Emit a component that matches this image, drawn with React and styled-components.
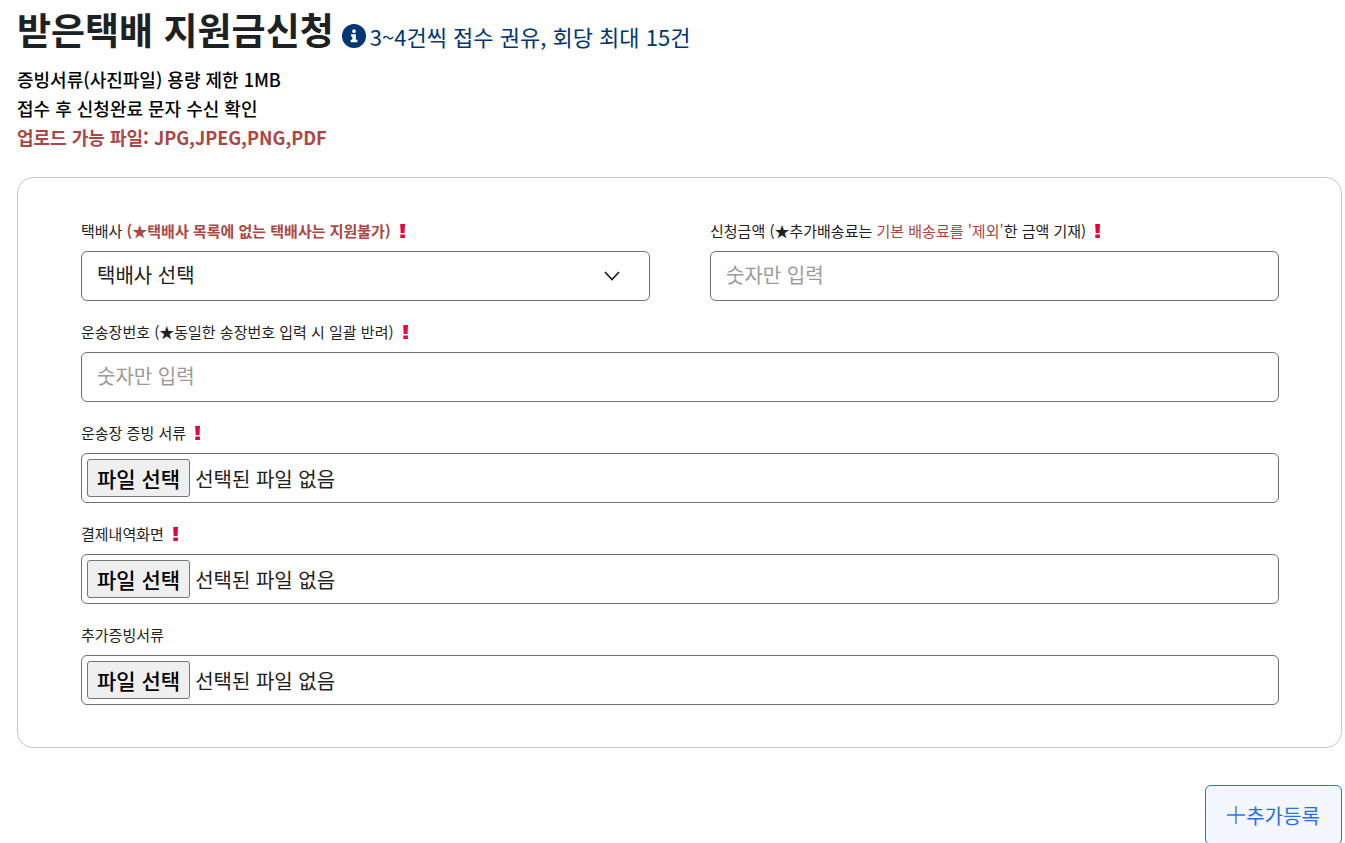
import React, { useId, useRef, useState } from "react";
import styled, { createGlobalStyle } from "styled-components";

const GlobalStyle = createGlobalStyle`
  *, *::before, *::after { box-sizing: border-box; }
  body {
    margin: 0;
    background: #ffffff;
    color: #1e2124;
    font-family: "Noto Sans CJK KR", "Noto Sans", sans-serif;
    font-size: 16px;
  }
  button, input, select { font: inherit; color: inherit; }
`;

const Page = styled.main`
  display: flex;
  flex-direction: column;
  padding: 5px 3px 40px 17px;
`;

const Heading = styled.header`
  display: flex;
  align-items: center;
  gap: 8px;
`;

const Title = styled.h1`
  margin: 0;
  font-size: 37px;
  line-height: 48px;
  font-weight: 700;
`;

const Notice = styled.p`
  display: flex;
  align-items: center;
  gap: 4px;
  margin: 0;
  padding-top: 14px;
  color: #003675;
  font-size: 22px;
  line-height: 32px;
`;

const Guide = styled.p`
  margin: 12px 0 0;
  color: #000000;
  font-size: 18px;
  line-height: 29px;
  font-weight: 500;
`;

const Line = styled.span`
  display: block;
`;

const Warn = styled.strong`
  color: #ad4545;
  font-weight: ${(p) => (p.$plain ? 400 : 700)};
`;

const Card = styled.section`
  display: flex;
  flex-direction: column;
  gap: 20px;
  margin-top: 25px;
  padding: 42px 62px 42px 63px;
  border: 1px solid #c6c6c6;
  border-radius: 16px;
`;

const Columns = styled.div`
  display: grid;
  grid-template-columns: 1fr 1fr;
  gap: 60px;
`;

const FieldBox = styled.div`
  display: flex;
  flex-direction: column;
  gap: 9px;
  min-width: 0;
`;

const Label = styled.label`
  display: flex;
  align-items: center;
  gap: 8px;
  font-size: 15px;
  line-height: 22px;
  white-space: nowrap;
`;

const controlFrame = `
  width: 100%;
  height: 50px;
  border: 1px solid #717171;
  border-radius: 6px;
  background: #ffffff;
  font-size: 20px;
`;

const TextInput = styled.input`
  ${controlFrame}
  padding: 0 15px 3px;
  &::placeholder { color: #9a9a9a; opacity: 1; }
`;

const SelectWrap = styled.div`
  display: grid;
  align-items: center;
  > * { grid-area: 1 / 1; }
  > svg { justify-self: end; margin-right: 30px; pointer-events: none; }
`;

const Select = styled.select`
  ${controlFrame}
  appearance: none;
  padding: 0 60px 4px 15px;
`;

const FileFrame = styled.div`
  ${controlFrame}
  display: flex;
  align-items: center;
  gap: 5px;
  padding: 0 5px;
`;

const FileButton = styled.button`
  height: 38px;
  padding: 0 9px;
  border: 1px solid #767676;
  border-radius: 3px;
  background: #efefef;
  color: #000000;
  font-size: 21px;
  line-height: 34px;
  font-weight: 500;
`;

const HiddenFile = styled.input`
  position: absolute;
  width: 1px;
  height: 1px;
  overflow: hidden;
  clip-path: inset(50%);
`;

const Actions = styled.div`
  display: flex;
  justify-content: flex-end;
  margin-top: 37px;
`;

const AddButton = styled.button`
  display: flex;
  align-items: center;
  justify-content: center;
  gap: 1px;
  width: 137px;
  height: 60px;
  padding: 0;
  border: 1px solid #256ef4;
  border-radius: 6px;
  background: #f4f7ff;
  color: #256ef4;
  font-size: 20px;
`;

const InfoIcon = () => (
  <svg width="24" height="24" viewBox="0 0 512 512" aria-hidden="true">
    <path fill="#003675" d="M256 0a256 256 0 1 0 0 512A256 256 0 1 0 256 0z" />
    <path fill="#fff" d="M256 112a40 40 0 1 1 0 80 40 40 0 1 1 0-80zM192 216h104v122h32v50H184v-50h36v-72h-28z" />
  </svg>
);

const RequiredMark = () => (
  <svg width="7" height="14" viewBox="0 0 7 14" role="img" aria-label="필수">
    <path fill="#eb003b" d="M1.200 0h4.800l-.5 9H1.700zM1.300 10.500h4.600V14H1.300z" />
  </svg>
);

const Chevron = () => (
  <svg width="16" height="10" viewBox="0 0 16 10" fill="none" stroke="#1e2124" strokeWidth="1.700" aria-hidden="true">
    <path d="M1 1l7 7.500L15 1" />
  </svg>
);

const PlusIcon = () => (
  <svg width="18" height="18" viewBox="0 0 18 18" fill="none" stroke="#256ef4" strokeWidth="1.300" aria-hidden="true">
    <path d="M9 0v18M0 9h18" />
  </svg>
);

function Field({ label, required, children }) {
  const id = useId();
  return (
    <FieldBox>
      <Label htmlFor={id}>
        <span>{label}</span>
        {required && <RequiredMark />}
      </Label>
      {children(id)}
    </FieldBox>
  );
}

function FilePicker({ id }) {
  const input = useRef(null);
  const [name, setName] = useState("");
  return (
    <FileFrame>
      <FileButton type="button" onClick={() => input.current.click()}>
        파일 선택
      </FileButton>
      <span>{name || "선택된 파일 없음"}</span>
      <HiddenFile
        ref={input}
        id={id}
        type="file"
        tabIndex={-1}
        accept=".jpg,.jpeg,.png,.pdf"
        onChange={(e) => setName(e.target.files[0]?.name ?? "")}
      />
    </FileFrame>
  );
}

export default function App() {
  return (
    <>
      <GlobalStyle />
      <Page lang="ko">
        <Heading>
          <Title>받은택배 지원금신청</Title>
          <Notice>
            <InfoIcon />
            <span>3~4건씩 접수 권유, 회당 최대 15건</span>
          </Notice>
        </Heading>
        <Guide>
          <Line>증빙서류(사진파일) 용량 제한 1MB</Line>
          <Line>접수 후 신청완료 문자 수신 확인</Line>
          <Line>
            <Warn>업로드 가능 파일: JPG,JPEG,PNG,PDF</Warn>
          </Line>
        </Guide>

        <Card>
          <Columns>
            <Field
              required
              label={<>택배사 <Warn>(★택배사 목록에 없는 택배사는 지원불가)</Warn></>}
            >
              {(id) => (
                <SelectWrap>
                  <Select id={id}>
                    <option>택배사 선택</option>
                  </Select>
                  <Chevron />
                </SelectWrap>
              )}
            </Field>
            <Field
              required
              label={<>신청금액 (★추가배송료는 <Warn $plain>기본 배송료를 '제외'</Warn>한 금액 기재)</>}
            >
              {(id) => <TextInput id={id} inputMode="numeric" placeholder="숫자만 입력" />}
            </Field>
          </Columns>
          <Field required label="운송장번호 (★동일한 송장번호 입력 시 일괄 반려)">
            {(id) => <TextInput id={id} inputMode="numeric" placeholder="숫자만 입력" />}
          </Field>
          <Field required label="운송장 증빙 서류">
            {(id) => <FilePicker id={id} />}
          </Field>
          <Field required label="결제내역화면">
            {(id) => <FilePicker id={id} />}
          </Field>
          <Field label="추가증빙서류">{(id) => <FilePicker id={id} />}</Field>
        </Card>

        <Actions>
          <AddButton type="button">
            <PlusIcon />
            추가등록
          </AddButton>
        </Actions>
      </Page>
    </>
  );
}
